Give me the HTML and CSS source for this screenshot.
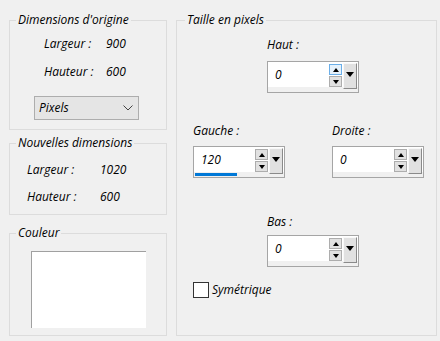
FILE: index.html
```html
<!DOCTYPE html>
<html>

	<head>
		<meta charset="UTF-8">
		<title>Taille du support</title>
		<link rel="stylesheet" href="styles.css">
	</head>

	<body>
		<div class="dlg">
			<div class="col-left">
				<fieldset class="grp grp-orig">
					<legend>Dimensions d'origine</legend>
					<div class="row"><span>Largeur :</span><span>900</span></div>
					<div class="row row2"><span>Hauteur :</span><span>600</span></div>
					<div class="select">
						<span>Pixels</span>
						<svg width="10" height="6" viewBox="0 0 10 6"><polyline points="0.5,0.5 5,5 9.5,0.5" fill="none" stroke="#444" stroke-width="1"/></svg>
					</div>
				</fieldset>

				<fieldset class="grp grp-new">
					<legend>Nouvelles dimensions</legend>
					<div class="row"><span>Largeur :</span><span>1020</span></div>
					<div class="row row2"><span>Hauteur :</span><span>600</span></div>
				</fieldset>

				<fieldset class="grp grp-color">
					<legend>Couleur</legend>
					<div class="swatch"></div>
				</fieldset>
			</div>

			<fieldset class="grp grp-size">
				<legend>Taille en pixels</legend>

				<div class="field f-top">
					<div class="lbl">Haut :</div>
					<div class="spin">
						<span class="spin-val">0</span>
						<span class="spin-btns"><i class="up hover"></i><i class="down"></i></span>
						<span class="spin-drop"></span>
					</div>
				</div>

				<div class="pair">
					<div class="field">
						<div class="lbl">Gauche :</div>
						<div class="spin focus">
							<span class="spin-val">120</span>
							<span class="spin-btns"><i class="up"></i><i class="down"></i></span>
							<span class="spin-drop"></span>
						</div>
					</div>
					<div class="field f-right">
						<div class="lbl">Droite :</div>
						<div class="spin">
							<span class="spin-val">0</span>
							<span class="spin-btns"><i class="up"></i><i class="down"></i></span>
							<span class="spin-drop"></span>
						</div>
					</div>
				</div>

				<div class="field f-bottom">
					<div class="lbl">Bas :</div>
					<div class="spin">
						<span class="spin-val">0</span>
						<span class="spin-btns"><i class="up"></i><i class="down"></i></span>
						<span class="spin-drop"></span>
					</div>
				</div>

				<label class="check"><span class="box"></span>Symétrique</label>
			</fieldset>
		</div>
	</body>

</html>
```

FILE: styles.css
```css
* {
	margin: 0;
	padding: 0;
	box-sizing: border-box;
}

body {
	background: #f0f0f0;
	font: italic 12px/16px "Open Sans", "Liberation Sans", sans-serif;
	color: #000;
	width: 440px;
	height: 341px;
	overflow: hidden;
}

.dlg {
	display: flex;
	gap: 9px;
	padding: 12px 0 0 9px;
	height: 336px;
}

.col-left {
	display: flex;
	flex-direction: column;
	width: 158px;
}

/* group boxes */
.grp {
	border: 1px solid #dcdcdc;
	padding: 0 0 9px 6px;
	min-width: 0;
}

.grp legend {
	padding: 0 2px;
	line-height: 16px;
}

.row {
	display: grid;
	grid-template-columns: 62px auto;
	margin: 8px 0 0 28px;
}

.row2 {
	margin-top: 12px;
}

.select {
	display: flex;
	align-items: center;
	justify-content: space-between;
	width: 105px;
	height: 24px;
	margin: 16px 0 0 18px;
	padding: 0 5px 0 4px;
	background: #e5e5e5;
	border: 1px solid #adadad;
}

.grp-new {
	margin-top: 5px;
}

.grp-new .row {
	grid-template-columns: 73px auto;
	margin: 11px 0 0 11px;
}

.grp-color {
	margin-top: 10px;
	padding-bottom: 7px;
}

.swatch {
	width: 115px;
	height: 77px;
	margin: 10px 0 0 15px;
	background: #fff;
	border-top: 1px solid #a0a0a0;
	border-left: 1px solid #a0a0a0;
}

.grp-size {
	width: 261px;
	padding-left: 8px;
}

/* spin boxes */
.field .lbl {
	margin-bottom: 7px;
}

.f-top {
	margin: 9px 0 0 82px;
}

.f-top .lbl {
	margin-bottom: 8px;
}

.pair {
	display: flex;
	gap: 47px;
	margin: 30px 0 0 8px;
}

.f-bottom {
	margin: 36px 0 0 82px;
}

.f-bottom .lbl {
	margin-bottom: 5px;
}

.spin {
	display: flex;
	align-items: flex-start;
	width: 92px;
	height: 32px;
	border: 1px solid #a5a5a5;
	background: linear-gradient(#fff 0 25px, #f0f0f0 25px);
}

.spin-val {
	flex: 1;
	align-self: stretch;
	padding-left: 7px;
	line-height: 26px;
}

.spin.focus .spin-val {
	background: linear-gradient(#0078d7, #0078d7) no-repeat 1px 26px / 42px 3px;
}

.spin-btns {
	display: flex;
	flex-direction: column;
	gap: 1px;
	width: 13px;
	margin-top: 2px;
}

.spin-btns i {
	display: flex;
	align-items: center;
	justify-content: center;
	height: 11px;
	border: 1px solid #adadad;
	background: #e1e1e1;
}

.spin-btns i::after {
	content: "";
	border-left: 3px solid transparent;
	border-right: 3px solid transparent;
}

.spin-btns .up::after {
	border-bottom: 4px solid #000;
}

.spin-btns .down::after {
	border-top: 4px solid #000;
}

.spin-btns .hover {
	border-color: #6aaee8;
	background: #e5f1fb;
}

.spin-drop {
	display: flex;
	justify-content: center;
	width: 14px;
	height: 26px;
	margin: 1px 1px 0 1px;
	padding-top: 8px;
	background: #e1e1e1;
	border-top: 1px solid #f8f8f8;
	border-left: 1px solid #f8f8f8;
	border-right: 1px solid #8a8a8a;
	border-bottom: 1px solid #8a8a8a;
}

.spin-drop::after {
	content: "";
	height: 0;
	border-left: 4px solid transparent;
	border-right: 4px solid transparent;
	border-top: 5px solid #000;
}

/* checkbox */
.check {
	display: flex;
	align-items: center;
	gap: 3px;
	margin: 15px 0 0 8px;
}

.check .box {
	width: 16px;
	height: 16px;
	border: 1px solid #333;
	background: #fff;
}
```
